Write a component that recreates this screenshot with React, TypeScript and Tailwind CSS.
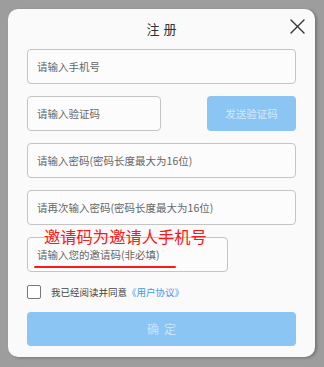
import { useState } from "react";

const font = { fontFamily: '"Noto Sans CJK SC", "Noto Sans", sans-serif' };

function Field({ placeholder, className }: { placeholder: string; className?: string }) {
    return (
        <input
            type="text"
            placeholder={placeholder}
            className={`h-[35px] rounded-[4px] border border-[#c4c4c4] bg-[#fcfcfc] pl-[9px] text-[10.5px] text-[#333] outline-none placeholder:text-[#666] ${className ?? ""}`}
        />
    );
}

export default function App() {
    const [agreed, setAgreed] = useState(false);

    return (
        <div className="h-[367px] w-[324px] bg-[#9d9d9d] pt-[9px] pl-[8px]" style={font}>
            <div className="flex h-[348px] w-[307px] flex-col rounded-[10px] bg-[#fafafa] px-[19px] pb-[11px] shadow-[2px_1px_3px_rgba(0,0,0,0.25)]">
                <div className="relative flex h-[40px] shrink-0 items-center justify-center">
                    <span className="pb-[1px] pl-[4px] text-[13px] tracking-[4px] text-[#333]">注册</span>
                    <button className="absolute top-[9px] right-[-9px] flex h-[16px] w-[16px] items-center justify-center">
                        <svg width="15" height="15" viewBox="0 0 15 15" fill="none">
                            <path d="M1 1 L14 14 M14 1 L1 14" stroke="#333" strokeWidth="1.4" strokeLinecap="round" />
                        </svg>
                    </button>
                </div>

                <div className="flex flex-col gap-[12px]">
                    <Field placeholder="请输入手机号" className="w-full" />
                    <div className="flex items-center justify-between">
                        <Field placeholder="请输入验证码" className="w-[134px]" />
                        <button className="h-[35px] w-[89px] rounded-[4px] bg-[#8bc5f3] text-[10.5px] text-[#d3e9fb]">发送验证码</button>
                    </div>
                    <Field placeholder="请输入密码(密码长度最大为16位)" className="w-full" />
                    <Field placeholder="请再次输入密码(密码长度最大为16位)" className="w-full" />
                    <div className="relative">
                        <Field placeholder="请输入您的邀请码(非必填)" className="w-[201px]" />
                        <span className="pointer-events-none absolute top-[-9px] left-[17px] text-[16.3px] leading-none text-[#ff1616]">邀请码为邀请人手机号</span>
                        <div className="pointer-events-none absolute top-[29px] left-[7px] h-[2px] w-[142px] rounded-full bg-[#ff1a1a]" />
                    </div>
                </div>

                <label className="mt-[13px] flex h-[14px] items-center">
                    <input
                        type="checkbox"
                        checked={agreed}
                        onChange={(e) => setAgreed(e.target.checked)}
                        className="h-[14px] w-[14px] appearance-none rounded-[2px] border-[1.5px] border-[#777] bg-white"
                    />
                    <span className="ml-[10px] text-[9.5px] text-[#444]">
                        我已经阅读并同意<span className="text-[#3a9bec]">《用户协议》</span>
                    </span>
                </label>

                <button className="mt-[13px] h-[34px] w-full rounded-[4px] bg-[#8bc5f3] pl-[5px] text-[12px] tracking-[5px] text-[#c9e4f9]">确定</button>
            </div>
        </div>
    );
}
